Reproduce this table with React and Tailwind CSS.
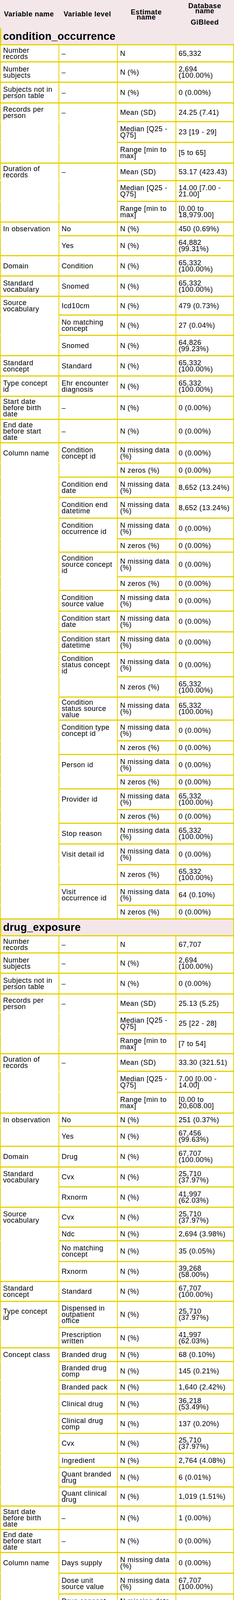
import React from "react";

const NM = "N missing data\n(%)";
const NZ = "N zeros (%)";

const H = {
  34: "h-[34px]",
  35: "h-[35px]",
  36: "h-[36px]",
  44: "h-[44px]",
  45: "h-[45px]",
  48: "h-[48px]",
  49: "h-[49px]",
  50: "h-[50px]",
  51: "h-[51px]",
  52: "h-[52px]",
  53: "h-[53px]",
  54: "h-[54px]",
  59: "h-[59px]",
  60: "h-[60px]",
  62: "h-[62px]",
  63: "h-[63px]",
  67: "h-[67px]",
};

const condition = [
  ["Number\nrecords", "–", "N", "65,332", 44],
  ["Number\nsubjects", "–", "N (%)", "2,694\n(100.00%)", 52],
  ["Subjects not in\nperson table", "–", "N (%)", "0 (0.00%)", 53],
  ["Records per\nperson", "–", "Mean (SD)", "24.25 (7.41)", 48],
  [null, null, "Median [Q25 -\nQ75]", "23 [19 - 29]", 53],
  [null, null, "Range [min to\nmax]", "[5 to 65]", 53],
  ["Duration of\nrecords", "–", "Mean (SD)", "53.17 (423.43)", 45],
  [null, null, "Median [Q25 -\nQ75]", "14.00 [7.00 -\n21.00]", 53],
  [null, null, "Range [min to\nmax]", "[0.00 to\n18,979.00]", 53],
  ["In observation", "No", "N (%)", "450 (0.69%)", 35],
  [null, "Yes", "N (%)", "64,882\n(99.31%)", 51],
  ["Domain", "Condition", "N (%)", "65,332\n(100.00%)", 52],
  ["Standard\nvocabulary", "Snomed", "N (%)", "65,332\n(100.00%)", 52],
  ["Source\nvocabulary", "Icd10cm", "N (%)", "479 (0.73%)", 48],
  [null, "No matching\nconcept", "N (%)", "27 (0.04%)", 52],
  [null, "Snomed", "N (%)", "64,826\n(99.23%)", 52],
  ["Standard\nconcept", "Standard", "N (%)", "65,332\n(100.00%)", 52],
  ["Type concept\nid", "Ehr encounter\ndiagnosis", "N (%)", "65,332\n(100.00%)", 52],
  ["Start date\nbefore birth\ndate", "–", "N (%)", "0 (0.00%)", 59],
  ["End date\nbefore start\ndate", "–", "N (%)", "0 (0.00%)", 60],
  ["Column name", "Condition\nconcept id", NM, "0 (0.00%)", 52],
  [null, null, NZ, "0 (0.00%)", 36],
  [null, "Condition end\ndate", NM, "8,652 (13.24%)", 52],
  [null, "Condition end\ndatetime", NM, "8,652 (13.24%)", 53],
  [null, "Condition\noccurrence id", NM, "0 (0.00%)", 53],
  [null, null, NZ, "0 (0.00%)", 34],
  [null, "Condition\nsource concept\nid", NM, "0 (0.00%)", 63],
  [null, null, NZ, "0 (0.00%)", 35],
  [null, "Condition\nsource value", NM, "0 (0.00%)", 53],
  [null, "Condition start\ndate", NM, "0 (0.00%)", 53],
  [null, "Condition start\ndatetime", NM, "0 (0.00%)", 53],
  [null, "Condition\nstatus concept\nid", NM, "0 (0.00%)", 62],
  [null, null, NZ, "65,332\n(100.00%)", 52],
  [null, "Condition\nstatus source\nvalue", NM, "65,332\n(100.00%)", 59],
  [null, "Condition type\nconcept id", NM, "0 (0.00%)", 53],
  [null, null, NZ, "0 (0.00%)", 35],
  [null, "Person id", NM, "0 (0.00%)", 53],
  [null, null, NZ, "0 (0.00%)", 35],
  [null, "Provider id", NM, "65,332\n(100.00%)", 53],
  [null, null, NZ, "0 (0.00%)", 35],
  [null, "Stop reason", NM, "65,332\n(100.00%)", 53],
  [null, "Visit detail id", NM, "0 (0.00%)", 53],
  [null, null, NZ, "65,332\n(100.00%)", 51],
  [null, "Visit\noccurrence id", NM, "64 (0.10%)", 53],
  [null, null, NZ, "0 (0.00%)", 35],
];

const drug = [
  ["Number\nrecords", "–", "N", "67,707", 44],
  ["Number\nsubjects", "–", "N (%)", "2,694\n(100.00%)", 52],
  ["Subjects not in\nperson table", "–", "N (%)", "0 (0.00%)", 53],
  ["Records per\nperson", "–", "Mean (SD)", "25.13 (5.25)", 48],
  [null, null, "Median [Q25 -\nQ75]", "25 [22 - 28]", 54],
  [null, null, "Range [min to\nmax]", "[7 to 54]", 51],
  ["Duration of\nrecords", "–", "Mean (SD)", "33.30 (321.51)", 45],
  [null, null, "Median [Q25 -\nQ75]", "7.00 [0.00 -\n14.00]", 54],
  [null, null, "Range [min to\nmax]", "[0.00 to\n20,608.00]", 53],
  ["In observation", "No", "N (%)", "251 (0.37%)", 34],
  [null, "Yes", "N (%)", "67,456\n(99.63%)", 51],
  ["Domain", "Drug", "N (%)", "67,707\n(100.00%)", 53],
  ["Standard\nvocabulary", "Cvx", "N (%)", "25,710\n(37.97%)", 51],
  [null, "Rxnorm", "N (%)", "41,997\n(62.03%)", 52],
  ["Source\nvocabulary", "Cvx", "N (%)", "25,710\n(37.97%)", 51],
  [null, "Ndc", "N (%)", "2,694 (3.98%)", 35],
  [null, "No matching\nconcept", "N (%)", "35 (0.05%)", 53],
  [null, "Rxnorm", "N (%)", "39,268\n(58.00%)", 51],
  ["Standard\nconcept", "Standard", "N (%)", "67,707\n(100.00%)", 51],
  ["Type concept\nid", "Dispensed in\noutpatient\noffice", "N (%)", "25,710\n(37.97%)", 67],
  [null, "Prescription\nwritten", "N (%)", "41,997\n(62.03%)", 52],
  ["Concept class", "Branded drug", "N (%)", "68 (0.10%)", 35],
  [null, "Branded drug\ncomp", "N (%)", "145 (0.21%)", 48],
  [null, "Branded pack", "N (%)", "1,640 (2.42%)", 35],
  [null, "Clinical drug", "N (%)", "36,218\n(53.49%)", 51],
  [null, "Clinical drug\ncomp", "N (%)", "137 (0.20%)", 50],
  [null, "Cvx", "N (%)", "25,710\n(37.97%)", 51],
  [null, "Ingredient", "N (%)", "2,764 (4.08%)", 36],
  [null, "Quant branded\ndrug", "N (%)", "6 (0.01%)", 50],
  [null, "Quant clinical\ndrug", "N (%)", "1,019 (1.51%)", 49],
  ["Start date\nbefore birth\ndate", "–", "N (%)", "1 (0.00%)", 60],
  ["End date\nbefore start\ndate", "–", "N (%)", "0 (0.00%)", 59],
  ["Column name", "Days supply", NM, "0 (0.00%)", 53],
  [null, "Dose unit\nsource value", NM, "67,707\n(100.00%)", 53],
  [null, "Drug concept\nid", NM, "0 (0.00%)", 53],
  [null, null, NZ, "0 (0.00%)", 35],
  [null, "Drug exposure\nend date", NM, "0 (0.00%)", 53],
  [null, "Drug exposure\nend datetime", NM, "0 (0.00%)", 52],
  [null, "Drug exposure\nid", NM, "0 (0.00%)", 54],
  [null, null, NZ, "0 (0.00%)", 35],
  [null, "Drug exposure\nstart date", NM, "0 (0.00%)", 53],
  [null, "Drug exposure\nstart datetime", NM, "0 (0.00%)", 52],
  [null, "Drug source\nconcept id", NM, "0 (0.00%)", 54],
  [null, null, NZ, "0 (0.00%)", 35],
  [null, "Drug source\nvalue", NM, "0 (0.00%)", 53],
  [null, "Drug type\nconcept id", NM, "0 (0.00%)", 53],
  [null, null, NZ, "0 (0.00%)", 35],
  [null, "Lot number", NM, "0 (0.00%)", 52],
  [null, "Person id", NM, "0 (0.00%)", 53],
  [null, null, NZ, "0 (0.00%)", 35],
  [null, "Provider id", NM, "0 (0.00%)", 53],
  [null, null, NZ, "67,707\n(100.00%)", 52],
  [null, "Quantity", NM, "0 (0.00%)", 53],
  [null, "Refills", NM, "0 (0.00%)", 53],
  [null, "Route concept\nid", NM, "0 (0.00%)", 53],
  [null, null, NZ, "67,707\n(100.00%)", 51],
  [null, "Route source\nvalue", NM, "67,707\n(100.00%)", 53],
  [null, "Sig", NM, "67,707\n(100.00%)", 52],
  [null, "Stop reason", NM, "67,707\n(100.00%)", 54],
  [null, "Verbatim end\ndate", NM, "5,763 (8.51%)", 52],
  [null, "Visit detail id", NM, "0 (0.00%)", 53],
  [null, null, NZ, "67,707\n(100.00%)", 52],
  [null, "Visit\noccurrence id", NM, "520 (0.77%)", 54],
  [null, null, NZ, "0 (0.00%)", 34],
];

function Cell({ text, last }) {
  const blank = text === null;
  return (
    <div
      className={
        "flex w-[150px] shrink-0 items-center border-l-2 border-t-[3px] border-[#e6d200] pl-[6px] pr-[6px] whitespace-pre " +
        (blank ? "border-t-white " : "") +
        (last ? "border-r-2" : "")
      }
    >
      {blank ? "" : text}
    </div>
  );
}

function Row({ r }) {
  const [a, b, c, d, h] = r;
  return (
    <div className={"flex " + H[h]}>
      <Cell text={a} />
      <Cell text={b} />
      <Cell text={c} />
      <Cell text={d} last />
    </div>
  );
}

export default function App() {
  return (
    <div className="w-[600px] bg-white text-black font-['Liberation_Sans',Arial,sans-serif] text-[18px] leading-[16px] tracking-[0.55px]">
      {/* Header */}
      <div className="flex h-[72px] bg-[#f3e7ea] font-bold">
        <div className="flex w-[150px] items-center pl-[10px] whitespace-pre leading-[20px]">Variable name</div>
        <div className="flex w-[150px] items-center pl-[13px] whitespace-pre leading-[20px]">Variable level</div>
        <div className="flex w-[150px] items-center justify-center pt-[3px] text-center whitespace-pre leading-[13px]">
          {"Estimate\nname"}
        </div>
        <div className="flex w-[150px] flex-col items-center text-center">
          <div className="pt-[9px] whitespace-pre leading-[13px]">{"Database\nname"}</div>
          <div className="mt-[13px] leading-[18px]">GiBleed</div>
        </div>
      </div>

      {/* condition_occurrence */}
      <div className="flex h-[41px] items-center border-l-[3px] border-[#e6d200] bg-[#f3e7ea] pl-[5px] text-[27px] font-bold tracking-[0.3px]">
        condition_occurrence
      </div>
      {condition.map((r, i) => (
        <Row key={"c" + i} r={r} />
      ))}

      {/* drug_exposure */}
      <div className="flex h-[43px] items-center border-l-[3px] border-r-2 border-t-[3px] border-[#e6d200] bg-[#f3e7ea] pl-[5px] text-[27px] font-bold tracking-[0.3px]">
        drug_exposure
      </div>
      <div className="border-b-2 border-[#e6d200]">
        {drug.map((r, i) => (
          <Row key={"d" + i} r={r} />
        ))}
      </div>
    </div>
  );
}
